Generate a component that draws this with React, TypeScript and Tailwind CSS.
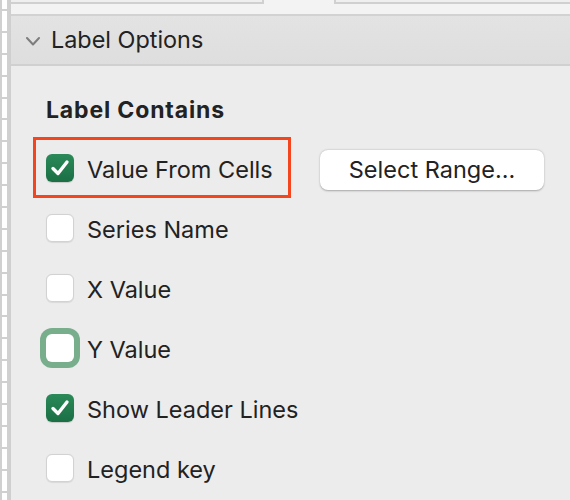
import React from "react";

const font = { fontFamily: 'Inter, "Liberation Sans", sans-serif' };

function Check({ checked, focus }: { checked?: boolean; focus?: boolean }) {
  if (checked) {
    return (
      <div className="w-[28px] h-[28px] rounded-[6px] bg-gradient-to-b from-[#2a8a58] to-[#1b6f45] flex items-center justify-center shrink-0 shadow-[0_1px_1px_rgba(0,0,0,0.15)]">
        <svg width="20" height="18" viewBox="0 0 20 18" fill="none">
          <path d="M3 9.5 L8 14.5 L17 3" stroke="white" strokeWidth="3.4" strokeLinecap="round" strokeLinejoin="round" />
        </svg>
      </div>
    );
  }
  if (focus) {
    return <div className="w-[28px] h-[28px] rounded-[6px] bg-white shrink-0 shadow-[0_0_0_6px_#79ae8d]" />;
  }
  return <div className="w-[28px] h-[28px] rounded-[6px] bg-white border border-[#d2d2d2] shrink-0 shadow-[0_0.5px_1px_rgba(0,0,0,0.08)]" />;
}

function Row({ label, checked, focus }: { label: string; checked?: boolean; focus?: boolean }) {
  return (
    <div className="flex items-center h-[28px]">
      <Check checked={checked} focus={focus} />
      <span className="ml-[13px] text-[23.5px] leading-none text-[#222222] pt-[3px] whitespace-nowrap">{label}</span>
    </div>
  );
}

export default function App() {
  const cells = Array.from({ length: 23 });
  return (
    <div className="w-[570px] h-[500px] overflow-hidden flex bg-white" style={font}>
      {/* spreadsheet grid sliver */}
      <div className="w-[9px] h-full flex flex-col shrink-0">
        <div className="w-[9px] h-full flex flex-col border-l-2 border-r-2 border-[#d0d0d0] bg-white">
          <div className="h-[11px] shrink-0 border-b-2 border-[#d0d0d0]" />
          {cells.map((_, i) => (
            <div key={i} className="h-[21.9px] shrink-0 border-b-2 border-[#d0d0d0]" />
          ))}
        </div>
      </div>
      {/* panel */}
      <div className="flex-1 h-full flex flex-col border-l-2 border-[#cfcfcf] bg-[#ececec]">
        {/* top tab strip */}
        <div className="h-[16px] shrink-0 bg-[#f3f3f3] border-b-2 border-[#d2d2d2] flex items-start">
          <div className="w-[253px] h-[4px] border-b-2 border-r-2 border-[#d0d0d0] bg-[#efefef]" />
          <div className="w-[70px] h-[4px]" />
          <div className="flex-1 h-[4px] border-b-2 border-l-2 border-[#d0d0d0] bg-[#efefef]" />
        </div>
        {/* header */}
        <div className="h-[50px] shrink-0 bg-gradient-to-b from-[#e3e3e3] to-[#dedede] border-b-2 border-[#d0d0d0] flex items-center pl-[15px]">
          <svg width="14" height="9" viewBox="0 0 14 9" fill="none" className="mt-[2px]">
            <path d="M1 1 L7 7.5 L13 1" stroke="#7d7d7d" strokeWidth="2" strokeLinecap="round" strokeLinejoin="round" />
          </svg>
          <span className="ml-[11px] text-[23.4px] leading-none text-[#222222]">Label Options</span>
        </div>
        {/* body */}
        <div className="flex-1 flex flex-col pl-[35px] pt-[33px]">
          <div className="text-[23px] leading-none font-bold tracking-[0.85px] text-[#222222]">Label Contains</div>
          <div className="flex flex-col gap-[32px] mt-[32px]">
            <div className="flex items-center h-[28px]">
              <div className="relative w-[274px] shrink-0">
                <Row label="Value From Cells" checked />
                <div className="absolute left-[-13px] top-[-17px] w-[258px] h-[61px] border-[3px] border-[#f4451f] pointer-events-none" />
              </div>
              <div className="w-[224px] h-[40px] shrink-0 mt-[4px] rounded-[8px] bg-white shadow-[0_0.5px_2px_rgba(0,0,0,0.3)] flex items-center justify-center text-[23.5px] leading-none text-[#222222] whitespace-nowrap">
                Select Range...
              </div>
            </div>
            <Row label="Series Name" />
            <Row label="X Value" />
            <Row label="Y Value" focus />
            <Row label="Show Leader Lines" checked />
            <Row label="Legend key" />
          </div>
        </div>
      </div>
    </div>
  );
}
